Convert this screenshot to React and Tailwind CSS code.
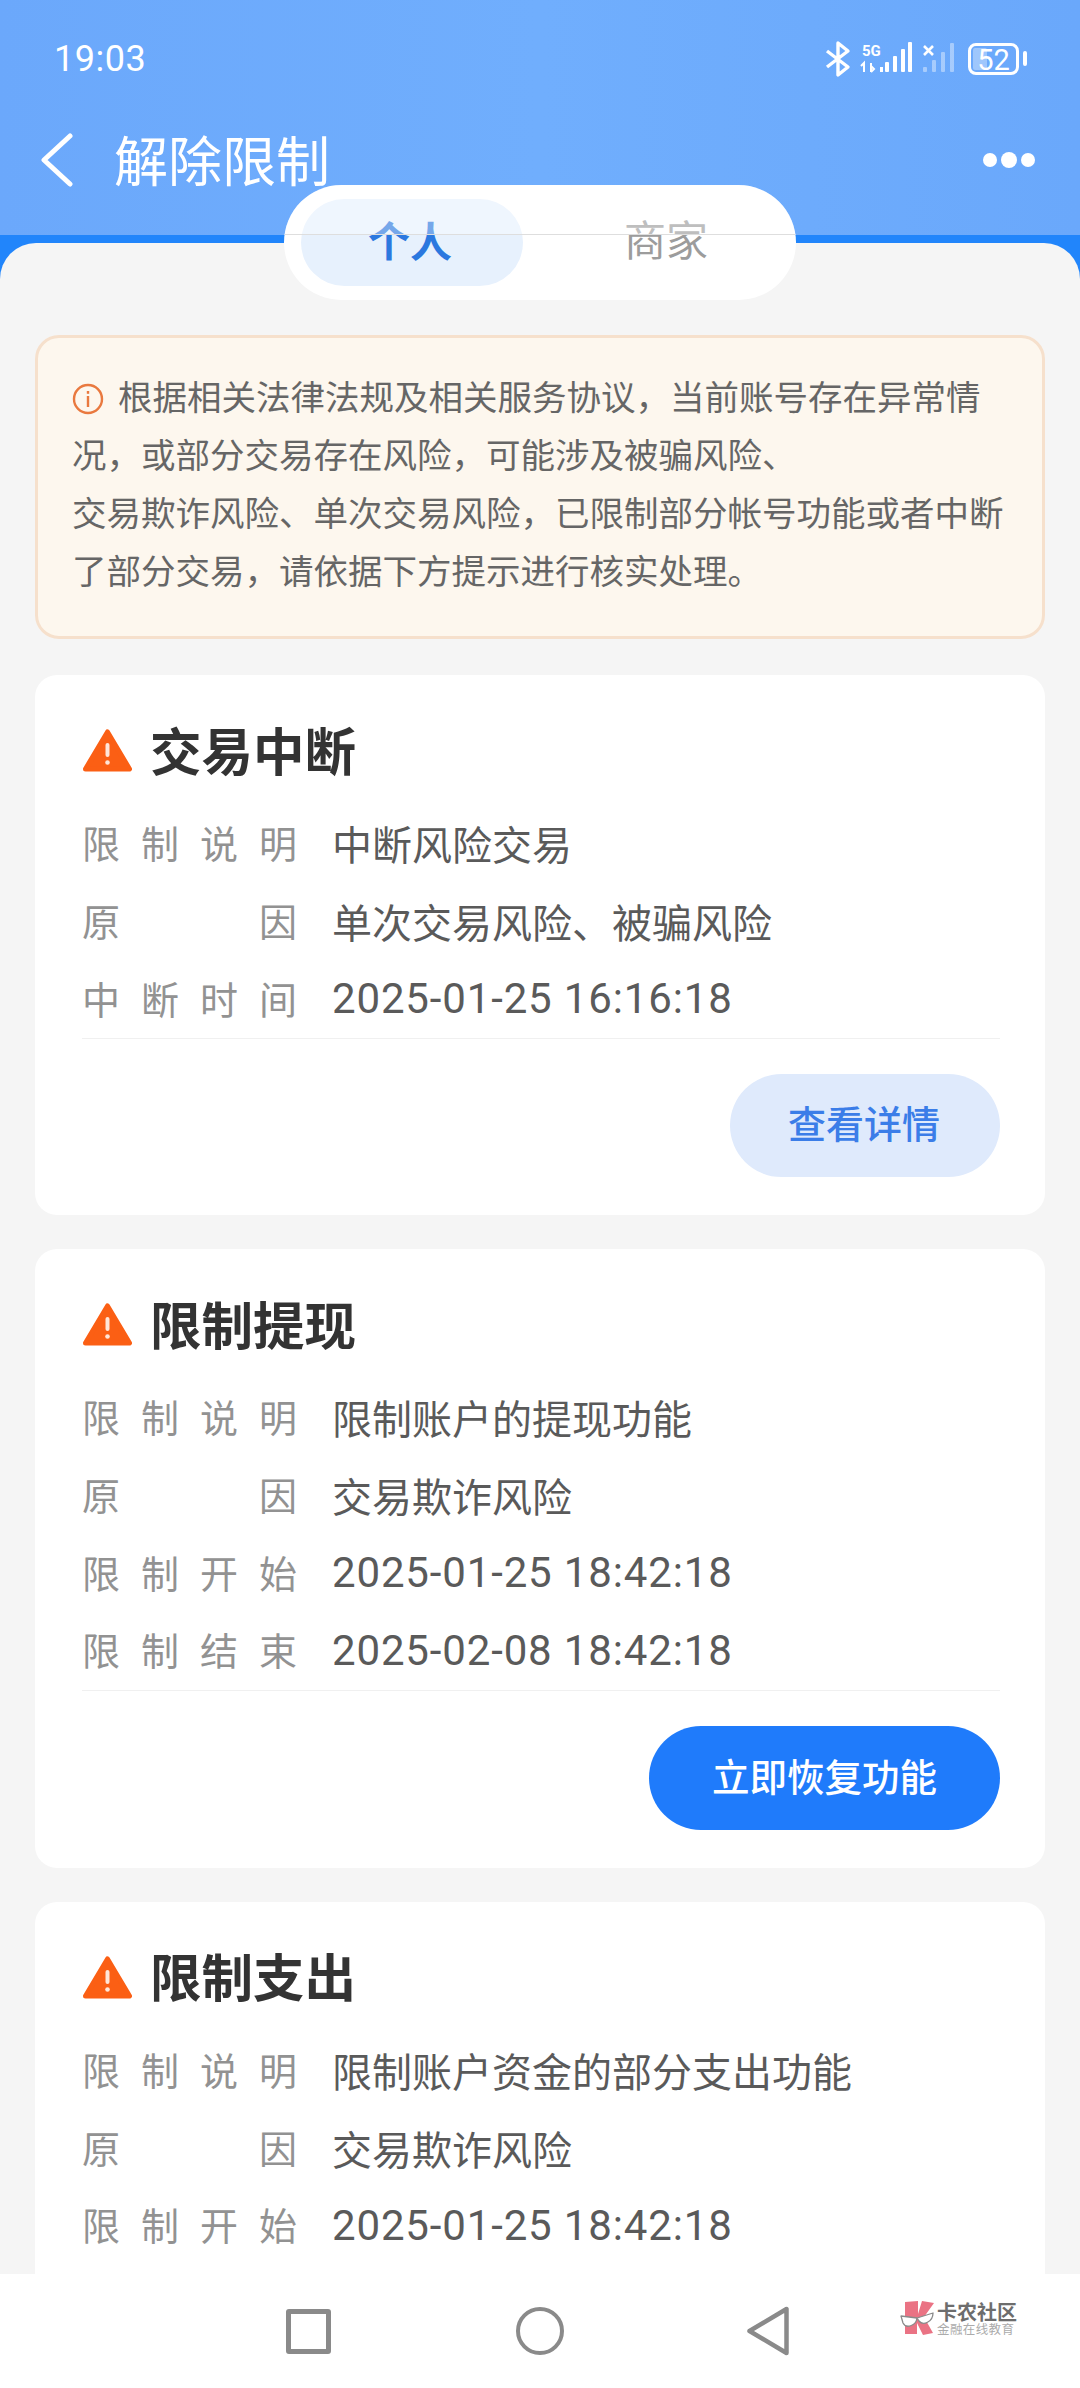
const FONT = '"Noto Sans CJK SC", sans-serif';

function Row({ label, value, date }) {
  return (
    <div className="flex h-[77.67px] items-center">
      <div className="flex w-[215px] shrink-0 justify-between pb-[3px] text-[38px] leading-none text-[#929292]">
        {label.map((c, i) => (
          <span key={i}>{c}</span>
        ))}
      </div>
      <div
        className={
          date
            ? "ml-[35px] whitespace-nowrap text-[42px] leading-none tracking-[0.85px] text-[#5a5a5a] font-['Roboto',sans-serif]"
            : 'ml-[35px] whitespace-nowrap pb-[1px] text-[40px] leading-none text-[#5a5a5a]'
        }
      >
        {value}
      </div>
    </div>
  );
}

function Warn() {
  return (
    <svg width="49" height="44" viewBox="0 0 49 44" className="ml-[1px] shrink-0">
      <path d="M24.5 3 L46.5 40 H2.5 Z" fill="#fb5f14" stroke="#fb5f14" strokeWidth="5" strokeLinejoin="round" />
      <rect x="22.5" y="14" width="4" height="14" rx="2" fill="#ffe6d8" />
      <circle cx="24.5" cy="33.5" r="2.3" fill="#ffe6d8" />
    </svg>
  );
}

function Card({ title, rows, button, primary }) {
  return (
    <section className="rounded-[22px] bg-white pl-[47px] pr-[45px] pt-[38px] pb-[38px]">
      <div className="mb-[16px] flex h-[76px] items-center">
        <Warn />
        <h2 className="ml-[18px] pb-[5px] text-[51.5px] font-bold leading-none text-[#333333]">{title}</h2>
      </div>
      {rows.map((r, i) => (
        <Row key={i} label={r[0]} value={r[1]} date={/^\d/.test(r[1])} />
      ))}
      {button && (
        <>
          <div className="h-px bg-[#f0f0f0]" />
          <div className="mt-[35px] flex justify-end">
            <button
              className={
                primary
                  ? 'flex h-[104px] w-[351px] items-center justify-center rounded-full bg-[#1f7bfb] pb-[4px] text-[37.5px] font-medium text-white'
                  : 'flex h-[103px] w-[270px] items-center justify-center rounded-full bg-[#dfeafc] pb-[7px] pr-[2px] text-[38px] font-medium text-[#3b7de8]'
              }
            >
              {button}
            </button>
          </div>
        </>
      )}
    </section>
  );
}

function StatusIcons() {
  return (
    <svg width="210" height="40" viewBox="820 40 210 40" className="block">
      <path d="M827 52 L848 68 L838 76 V44 L848 52 L827 68" fill="none" stroke="#fff" strokeWidth="3.4" strokeLinejoin="round" />
      <text x="862" y="57" fontSize="15" fontWeight="700" fill="#fff" fontFamily="Roboto, sans-serif">5G</text>
      <path d="M864 73 V64 L861 67 M871 64 V73 M871 73 L874 70 L871 67" fill="none" stroke="#fff" strokeWidth="2" />
      <rect x="880" y="68" width="3" height="5" fill="#fff" />
      <rect x="885" y="63" width="4" height="10" rx="1" fill="#fff" />
      <rect x="893" y="57" width="4" height="16" rx="1" fill="#fff" />
      <rect x="901" y="50" width="4" height="23" rx="1" fill="#fff" />
      <rect x="908" y="43" width="4" height="30" rx="1" fill="#fff" />
      <path d="M924 47 L933 56 M933 47 L924 56" stroke="#fff" strokeWidth="2.6" />
      <g fill="#fff" opacity="0.4">
        <rect x="923" y="68" width="4" height="5" rx="1" />
        <rect x="932" y="61" width="4" height="12" rx="1" />
        <rect x="941" y="53" width="4" height="20" rx="1" />
        <rect x="950" y="44" width="4" height="29" rx="1" />
      </g>
      <rect x="969.5" y="45.5" width="48" height="29" rx="6.5" fill="none" stroke="#fff" strokeWidth="3" />
      <rect x="973" y="49" width="14" height="22" rx="2" fill="#fff" opacity="0.35" />
      <text x="993.5" y="70.5" fontSize="29" textAnchor="middle" fill="#fff" fontFamily="Roboto, sans-serif">52</text>
      <rect x="1023" y="52" width="4" height="15" rx="2" fill="#fff" />
    </svg>
  );
}

function Logo() {
  return (
    <div className="flex h-[36px] w-[118px] items-center">
      <svg width="36" height="36" viewBox="0 0 36 36" className="shrink-0">
        <path d="M5 2 L18 1 V14 L22 1 L34 3 L24 17 L33 33 L23 35 L17 23 V34 L5 34 Z" fill="#ea7384" />
        <path d="M1 16 L17 18 C16 26 6 29 3 23 Z" fill="#fff" stroke="#8a8a8a" strokeWidth="1.3" strokeLinejoin="round" />
        <path d="M17 18 L33 13 C33 22 23 26 19 21 Z" fill="#fff" stroke="#8a8a8a" strokeWidth="1.3" strokeLinejoin="round" />
      </svg>
      <div className="ml-[1px] flex flex-col">
        <span className="whitespace-nowrap text-[20px] font-bold leading-[21px] text-[#6d6d6d]">卡农社区</span>
        <span className="whitespace-nowrap text-[12.5px] leading-[13px] tracking-[0.4px] text-[#ababab]">金融在线教育</span>
      </div>
    </div>
  );
}

export default function App() {
  return (
    <div lang="zh-CN" className="relative flex h-[2388px] w-[1080px] flex-col overflow-hidden bg-white" style={{ fontFamily: FONT }}>
      <header className="h-[235px] shrink-0 bg-gradient-to-r from-[#6ba8fb] via-[#70aefd] to-[#6aa8fb]">
        <div className="flex h-[118px] items-center justify-between pl-[54px] pr-[50px]">
          <span className="text-[36px] leading-none tracking-[0.5px] text-white font-['Roboto',sans-serif]">19:03</span>
          <StatusIcons />
        </div>
        <div className="flex h-[84px] items-center justify-between pl-[39px] pr-[43px]">
          <div className="flex items-center">
            <svg width="36" height="54" viewBox="0 0 36 54">
              <path d="M31 3 L5 27 L31 51" fill="none" stroke="#fff" strokeWidth="5" strokeLinecap="round" strokeLinejoin="round" />
            </svg>
            <h1 className="ml-[39px] pb-[3px] text-[54px] leading-none text-white">解除限制</h1>
          </div>
          <div className="flex items-center gap-[4px] pr-[2px]">
            <span className="size-[14px] rounded-full bg-white" />
            <span className="size-[16px] rounded-full bg-white" />
            <span className="size-[14px] rounded-full bg-white" />
          </div>
        </div>
      </header>

      <div className="absolute left-[284px] top-[185px] z-10 flex h-[115px] w-[512px] items-center overflow-hidden rounded-full bg-white pl-[17px]">
        <div className="flex h-[87px] w-[222px] items-center justify-center rounded-[44px] bg-[#e7f1fd] pb-[8px] pr-[4px] text-[42px] font-semibold leading-none text-[#2b78df]">个人</div>
        <div className="ml-[34px] flex w-[222px] items-center justify-center pb-[9px] pr-[4px] text-[42px] leading-none text-[#9c9c9c]">商家</div>
        <div className="absolute inset-x-0 top-0 h-[50px] border-b border-[#dedede] bg-white/35" />
      </div>

      <div className="flex min-h-0 flex-1 flex-col bg-[#2185fb] pt-[8px]">
        <main className="flex min-h-0 flex-1 flex-col gap-[34px] overflow-hidden rounded-t-[36px] bg-[#f5f5f5] px-[35px] pt-[92px]">
          <div className="mb-[2px] h-[304px] shrink-0 rounded-[24px] border-[3px] border-[#f6e0cc] bg-[#fdf7ee] pl-[34px] pt-[28px] text-[34.5px] leading-[58px] text-[#666666]">
            <div className="whitespace-nowrap">
              <svg width="32" height="32" viewBox="0 0 32 32" className="mr-[14px] inline-block align-[-5px]">
                <circle cx="16" cy="16" r="14" fill="none" stroke="#e9793f" strokeWidth="2.4" />
                <rect x="14.8" y="13" width="2.4" height="11" fill="#e9793f" />
                <rect x="14.8" y="8" width="2.4" height="2.8" fill="#e9793f" />
              </svg>
              根据相关法律法规及相关服务协议，当前账号存在异常情
              <br />
              况，或部分交易存在风险，可能涉及被骗风险、
              <br />
              交易欺诈风险、单次交易风险，已限制部分帐号功能或者中断
              <br />
              了部分交易，请依据下方提示进行核实处理。
            </div>
          </div>

          <Card
            title="交易中断"
            button="查看详情"
            rows={[
              [['限', '制', '说', '明'], '中断风险交易'],
              [['原', '因'], '单次交易风险、被骗风险'],
              [['中', '断', '时', '间'], '2025-01-25 16:16:18'],
            ]}
          />
          <Card
            title="限制提现"
            button="立即恢复功能"
            primary
            rows={[
              [['限', '制', '说', '明'], '限制账户的提现功能'],
              [['原', '因'], '交易欺诈风险'],
              [['限', '制', '开', '始'], '2025-01-25 18:42:18'],
              [['限', '制', '结', '束'], '2025-02-08 18:42:18'],
            ]}
          />
          <Card
            title="限制支出"
            rows={[
              [['限', '制', '说', '明'], '限制账户资金的部分支出功能'],
              [['原', '因'], '交易欺诈风险'],
              [['限', '制', '开', '始'], '2025-01-25 18:42:18'],
            ]}
          />
        </main>
      </div>

      <nav className="relative flex h-[114px] shrink-0 items-center bg-white pl-[286px]">
        <span className="h-[45px] w-[45px] rounded-[3px] border-[5px] border-[#8a8a8a]" />
        <span className="ml-[185px] h-[48px] w-[48px] rounded-full border-[4.5px] border-[#8a8a8a]" />
        <svg width="44" height="50" viewBox="0 0 44 50" className="ml-[182px]">
          <path d="M40.5 3 V47 L3.5 25 Z" fill="none" stroke="#8a8a8a" strokeWidth="4.5" strokeLinejoin="round" />
        </svg>
        <div className="absolute left-[900px] top-[26px]">
          <Logo />
        </div>
      </nav>
    </div>
  );
}
